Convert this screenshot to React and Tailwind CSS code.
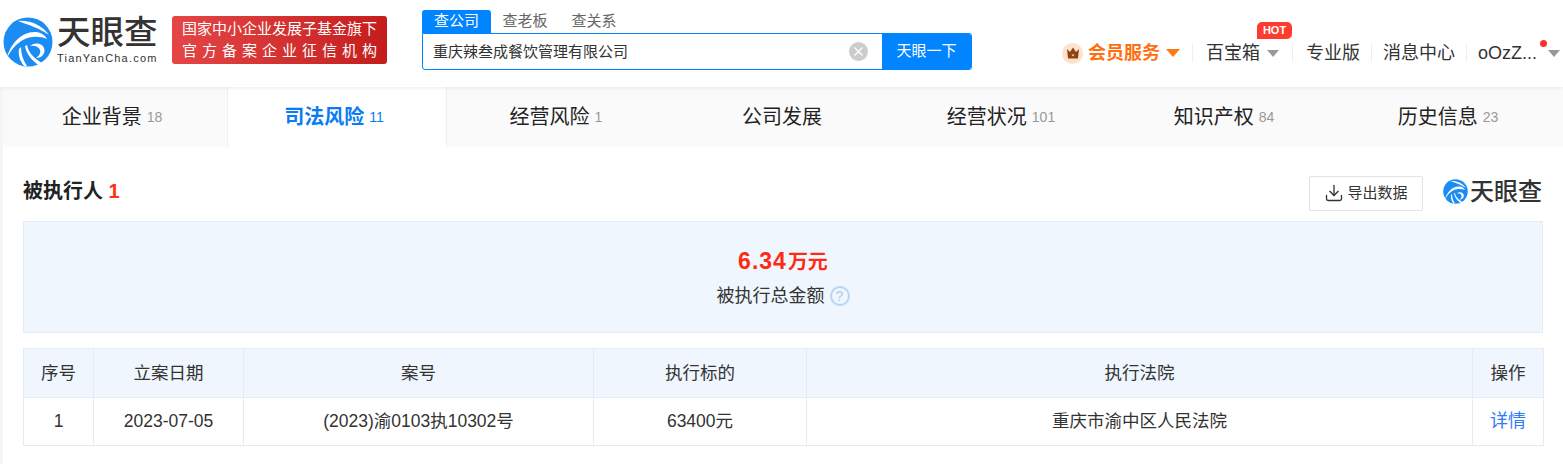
import { Download } from 'lucide-react';

const FONT = 'font-["Liberation_Sans","Noto_Sans_CJK_SC",sans-serif]';

const TABS = [
  { name: '企业背景', count: '18' },
  { name: '司法风险', count: '11', active: true },
  { name: '经营风险', count: '1' },
  { name: '公司发展' },
  { name: '经营状况', count: '101' },
  { name: '知识产权', count: '84' },
  { name: '历史信息', count: '23' },
];

function LogoMark({ className }) {
  return (
    <svg className={className} viewBox="0 0 50 50">
      <circle cx="25" cy="25" r="24.5" fill="#1c8cf5" />
      <path d="M15 4C27 3 39 8 46 18 36 11 26 8 15 4z" fill="#fff" />
      <path d="M4 41C7 27 19 14 33 15c5 0.500 9 3 11 7-7-3-17-3-24 1C13 27 8 33 4 41z" fill="#fff" />
      <path d="M27 29c5-4 12-3 14 2 2 5-2 10-8 10 3-2 5-5 4-8-1-3-5-5-10-4z" fill="#fff" />
      <path d="M24 28c1 6 5 12 15 18l-3 2.500C28 43 23 36 22 29z" fill="#fff" />
      <path d="M18 30c0 7 2 13 6 19h-3c-4-5-6-11-5-17z" fill="#fff" />
    </svg>
  );
}

function GrayCaret({ className = '' }) {
  return <span className={`inline-block w-0 h-0 border-x-[6px] border-x-transparent border-t-[7px] border-t-[#999999] ${className}`} />;
}

function Divider() {
  return <span className="w-px h-[18px] bg-[#eeeeee]" />;
}

function Header() {
  return (
    <header className="h-[87px] bg-white flex items-start shadow-[0_1px_4px_rgba(0,0,0,0.08)] relative z-10">
      {/* Logo */}
      <div className="ml-[3px] mt-[17px] flex items-start w-[169px] shrink-0">
        <LogoMark className="w-[50px] h-[50px]" />
        <div className="ml-[4px] flex flex-col">
          <span className="text-[33.5px] leading-[33px] font-medium text-[#333333] -mt-[1px] whitespace-nowrap">天眼查</span>
          <span className="text-[11px] leading-[12px] mt-[3px] text-[#333333] tracking-[1.2px] whitespace-nowrap">TianYanCha.com</span>
        </div>
      </div>

      {/* Banner */}
      <div className="mt-[16px] w-[215px] h-[48px] shrink-0 rounded-[3px] bg-gradient-to-r from-[#e54545] to-[#c41c1c] text-white flex flex-col items-center justify-center">
        <span className="text-[15px] leading-[22px] whitespace-nowrap">国家中小企业发展子基金旗下</span>
        <span className="text-[15px] leading-[22px] tracking-[5px] -mr-[5px] whitespace-nowrap">官方备案企业征信机构</span>
      </div>

      {/* Search */}
      <div className="ml-[35px] mt-[10px] w-[550px] shrink-0">
        <div className="flex h-[23px] text-[15px] items-center text-[#666666]">
          <span className="w-[69px] h-full rounded-t-[3px] bg-[#0084ff] text-white flex items-center justify-center">查公司</span>
          <span className="ml-[10px] w-[48px] text-center">查老板</span>
          <span className="ml-[21px] w-[48px] text-center">查关系</span>
        </div>
        <div className="flex h-[37px] border border-[#0084ff] rounded-b-[3px] rounded-tr-[3px] overflow-hidden">
          <div className="flex-1 flex items-center pl-[10px] pr-[14px] text-[15px] text-[#333333]">
            <span className="flex-1 pt-[2px]">重庆辣叁成餐饮管理有限公司</span>
            <span className="w-[19px] h-[19px] rounded-full bg-[#cccccc] flex items-center justify-center">
              <svg className="w-[9px] h-[9px]" viewBox="0 0 9 9" stroke="#fff" strokeWidth="1.4" strokeLinecap="round">
                <path d="M1 1l7 7M8 1l-7 7" />
              </svg>
            </span>
          </div>
          <div className="w-[89px] bg-[#0084ff] text-white text-[15px] flex items-center justify-center">天眼一下</div>
        </div>
      </div>

      {/* Right nav */}
      <nav className="ml-[90px] mt-[40px] h-[26px] flex items-center shrink-0 text-[18px] text-[#333333] whitespace-nowrap">
        <span className="w-[21px] h-[21px] rounded-full bg-[#fde3cd] flex items-center justify-center">
          <svg className="w-[14px] h-[12px]" viewBox="0 0 14 12">
            <path d="M1 2l3 3 3-4.500 3 4.500 3-3-1 9.500H2z" fill="#8f4312" />
            <path d="M5.500 7.500h3L7 9.500z" fill="#fde3cd" />
          </svg>
        </span>
        <span className="ml-[5px] font-bold text-[#ff6f0f]">会员服务</span>
        <span className="inline-block w-0 h-0 border-x-[7px] border-x-transparent border-t-[8px] border-t-[#ff7a14] ml-[6px] mr-[12px]" />
        <Divider />
        <span className="ml-[13px] relative">
          百宝箱
          <span className="absolute -top-[18px] left-[51px] w-[35px] h-[17px] rounded-t-[5px] rounded-br-[5px] bg-[#ff3b30] text-white text-[11px] leading-[17px] font-bold text-center">HOT</span>
        </span>
        <GrayCaret className="ml-[7px] mr-[13px]" />
        <Divider />
        <span className="ml-[13px] mr-[11px]">专业版</span>
        <Divider />
        <span className="ml-[11px] mr-[11px]">消息中心</span>
        <Divider />
        <span className="ml-[11px] relative">
          oOzZ...
          <span className="absolute top-0 -right-[10px] w-[7px] h-[7px] rounded-full bg-[#ff3030]" />
        </span>
        <GrayCaret className="ml-[11px]" />
      </nav>
    </header>
  );
}

function TabBar() {
  return (
    <div className="ml-[3px] h-[60px] grid grid-cols-[224px_220px_224px_222px_222px_224px_224px] bg-[#fafafa]">
      {TABS.map(t => (
        <div
          key={t.name}
          className={`flex items-center justify-center gap-[5px] text-[20px] ${t.count ? 'pr-[6px]' : ''} ${t.active ? 'bg-white font-bold text-[#0a7cf3] border-x border-[#f0f0f0]' : 'text-[#222222]'}`}
        >
          <span>{t.name}</span>
          {t.count && <span className={`text-[14px] font-normal ${t.active ? 'text-[#0a7cf3]' : 'text-[#999999]'}`}>{t.count}</span>}
        </div>
      ))}
    </div>
  );
}

function Content() {
  return (
    <section className="ml-[3px] bg-white pl-[20px] pr-[20px] h-[317px]">
      <div className="flex items-center h-[74px] pt-[14px]">
        <h2 className="text-[20px] font-bold text-[#222222]">被执行人 <span className="text-[#ff3010]">1</span></h2>
        <button className="ml-auto mt-[4px] w-[114px] h-[35px] border border-[#e2e2e2] rounded-[2px] flex items-center justify-center gap-[3px] text-[15px] text-[#333333]">
          <Download className="w-[20px] h-[20px]" strokeWidth={1.6} />
          导出数据
        </button>
        <div className="ml-[20px] w-[100px] flex items-center">
          <LogoMark className="w-[25px] h-[25px]" />
          <span className="ml-[2px] text-[24px] leading-[25px] font-medium text-[#333333] whitespace-nowrap">天眼查</span>
        </div>
      </div>

      <div className="h-[112px] bg-[#eff6fd] border border-[#e3ecf5] flex flex-col items-center">
        <div className="mt-[24px] font-bold text-[#ff2a14] text-[23px] leading-[30px] tracking-[1px]">
          6.34<span className="text-[20px] ml-[1px] tracking-normal">万元</span>
        </div>
        <div className="mt-[7px] flex items-center text-[18px] leading-[24px] text-[#333333]">
          被执行总金额
          <span className="ml-[5px] w-[20px] h-[20px] rounded-full border-2 border-[#b5d6f2] text-[#a8cdee] text-[14px] leading-[16px] text-center">?</span>
        </div>
      </div>

      <table className="mt-[15px] w-[1520px] table-fixed border-collapse text-[17.5px] text-[#333333] text-center">
        <colgroup>
          <col className="w-[70px]" />
          <col className="w-[150px]" />
          <col className="w-[350px]" />
          <col className="w-[213px]" />
          <col className="w-[666px]" />
          <col className="w-[71px]" />
        </colgroup>
        <thead>
          <tr className="h-[49px] bg-[#eff6fd]">
            {['序号', '立案日期', '案号', '执行标的', '执行法院', '操作'].map(h => (
              <th key={h} className="border border-[#e3ecf5] font-normal">{h}</th>
            ))}
          </tr>
        </thead>
        <tbody>
          <tr className="h-[48px]">
            <td className="border border-[#e3ecf5]">1</td>
            <td className="border border-[#e3ecf5]">2023-07-05</td>
            <td className="border border-[#e3ecf5]">(2023)渝0103执10302号</td>
            <td className="border border-[#e3ecf5]">63400元</td>
            <td className="border border-[#e3ecf5]">重庆市渝中区人民法院</td>
            <td className="border border-[#e3ecf5] text-[#2f7bf5] text-[18px]">详情</td>
          </tr>
        </tbody>
      </table>
    </section>
  );
}

export default function App() {
  return (
    <div className={`w-[1563px] h-[464px] overflow-hidden bg-[#f5f5f5] ${FONT}`}>
      <Header />
      <TabBar />
      <Content />
    </div>
  );
}
